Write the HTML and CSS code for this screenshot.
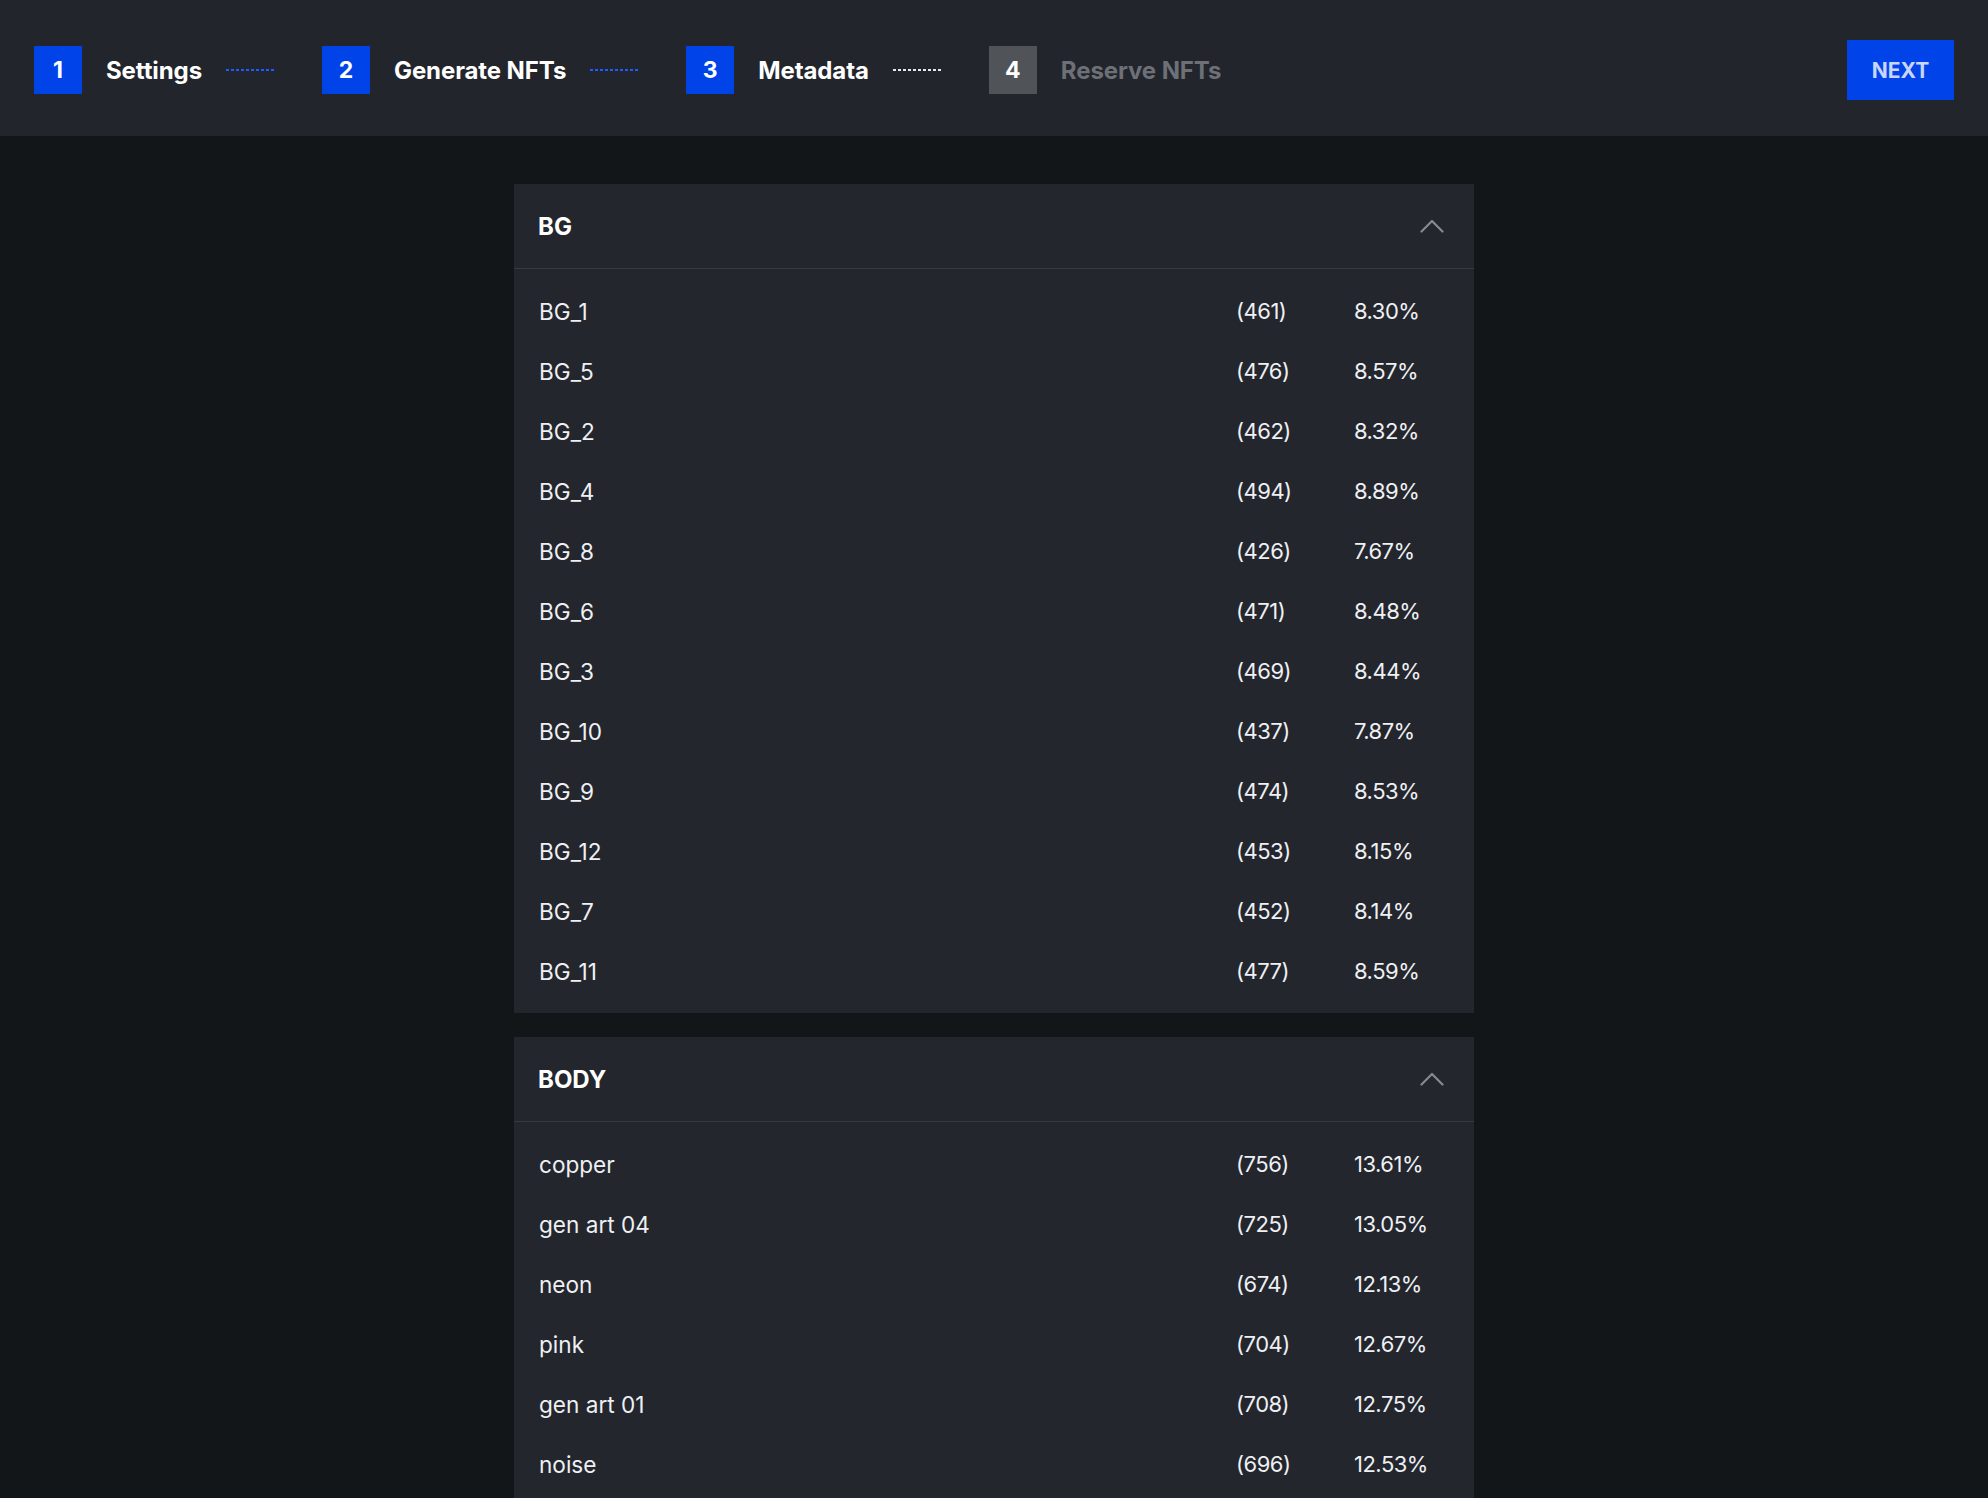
FILE: index.html
```html
<!DOCTYPE html>
<html lang="en">
<head>
<meta charset="utf-8">
<title>Metadata</title>
<link rel="stylesheet" href="styles.css">
</head>
<body>
<header class="topbar">
  <nav class="steps">
    <div class="step">
      <span class="num">1</span><span class="label">Settings</span>
      <svg class="conn conn-blue" width="48" height="2" viewBox="0 0 48 2"><line x1="0" y1="1" x2="48" y2="1" stroke="currentColor" stroke-width="1.4" stroke-dasharray="3 2" shape-rendering="crispEdges"/></svg>
    </div>
    <div class="step">
      <span class="num">2</span><span class="label">Generate NFTs</span>
      <svg class="conn conn-blue" width="48" height="2" viewBox="0 0 48 2"><line x1="0" y1="1" x2="48" y2="1" stroke="currentColor" stroke-width="1.4" stroke-dasharray="3 2" shape-rendering="crispEdges"/></svg>
    </div>
    <div class="step">
      <span class="num">3</span><span class="label">Metadata</span>
      <svg class="conn conn-white" width="48" height="2" viewBox="0 0 48 2"><line x1="0" y1="1" x2="48" y2="1" stroke="currentColor" stroke-width="1.4" stroke-dasharray="3 2" shape-rendering="crispEdges"/></svg>
    </div>
    <div class="step step-off">
      <span class="num">4</span><span class="label">Reserve NFTs</span>
    </div>
  </nav>
  <button class="next">NEXT</button>
</header>

<main class="content">
  <section class="panel">
    <div class="panel-head">
      <h2 class="panel-title">BG</h2>
      <svg class="chev" width="24" height="14" viewBox="0 0 24 14"><path d="M1.5 12.5 L12 2 L22.5 12.5" fill="none" stroke="currentColor" stroke-width="2.2" stroke-linecap="round" stroke-linejoin="round"/></svg>
    </div>
    <div class="panel-body">
      <div class="row"><span class="name">BG_1</span><span class="count">(461)</span><span class="pct">8.30%</span></div>
      <div class="row"><span class="name">BG_5</span><span class="count">(476)</span><span class="pct">8.57%</span></div>
      <div class="row"><span class="name">BG_2</span><span class="count">(462)</span><span class="pct">8.32%</span></div>
      <div class="row"><span class="name">BG_4</span><span class="count">(494)</span><span class="pct">8.89%</span></div>
      <div class="row"><span class="name">BG_8</span><span class="count">(426)</span><span class="pct">7.67%</span></div>
      <div class="row"><span class="name">BG_6</span><span class="count">(471)</span><span class="pct">8.48%</span></div>
      <div class="row"><span class="name">BG_3</span><span class="count">(469)</span><span class="pct">8.44%</span></div>
      <div class="row"><span class="name">BG_10</span><span class="count">(437)</span><span class="pct">7.87%</span></div>
      <div class="row"><span class="name">BG_9</span><span class="count">(474)</span><span class="pct">8.53%</span></div>
      <div class="row"><span class="name">BG_12</span><span class="count">(453)</span><span class="pct">8.15%</span></div>
      <div class="row"><span class="name">BG_7</span><span class="count">(452)</span><span class="pct">8.14%</span></div>
      <div class="row"><span class="name">BG_11</span><span class="count">(477)</span><span class="pct">8.59%</span></div>
    </div>
  </section>

  <section class="panel">
    <div class="panel-head">
      <h2 class="panel-title">BODY</h2>
      <svg class="chev" width="24" height="14" viewBox="0 0 24 14"><path d="M1.5 12.5 L12 2 L22.5 12.5" fill="none" stroke="currentColor" stroke-width="2.2" stroke-linecap="round" stroke-linejoin="round"/></svg>
    </div>
    <div class="panel-body">
      <div class="row"><span class="name">copper</span><span class="count">(756)</span><span class="pct">13.61%</span></div>
      <div class="row"><span class="name">gen art 04</span><span class="count">(725)</span><span class="pct">13.05%</span></div>
      <div class="row"><span class="name">neon</span><span class="count">(674)</span><span class="pct">12.13%</span></div>
      <div class="row"><span class="name">pink</span><span class="count">(704)</span><span class="pct">12.67%</span></div>
      <div class="row"><span class="name">gen art 01</span><span class="count">(708)</span><span class="pct">12.75%</span></div>
      <div class="row"><span class="name">noise</span><span class="count">(696)</span><span class="pct">12.53%</span></div>
    </div>
  </section>
</main>
</body>
</html>
```

FILE: styles.css
```css
* { box-sizing: border-box; }

html, body {
  margin: 0;
  padding: 0;
}

body {
  background: #131619;
  color: #eef0f3;
  font-family: Inter, "Noto Sans", "Liberation Sans", sans-serif;
  -webkit-font-smoothing: antialiased;
}

.topbar {
  height: 136px;
  padding: 4px 34px 0 34px;
  background: #22252b;
  display: flex;
  align-items: center;
  justify-content: space-between;
}

.steps {
  display: flex;
  align-items: center;
}

.step {
  display: flex;
  align-items: center;
}

.num {
  width: 48px;
  height: 48px;
  display: flex;
  align-items: center;
  justify-content: center;
  background: #0043e8;
  color: #ffffff;
  font-size: 23px;
  font-weight: 700;
  margin-right: 24px;
}

.label {
  font-size: 24px;
  font-weight: 700;
  color: #ffffff;
  margin-right: 24px;
  letter-spacing: -0.1px;
}

.conn {
  display: block;
  width: 48px;
  height: 2px;
  margin-right: 48px;
}

.conn-blue {
  color: #1f5cff;
}

.conn-white {
  color: #e6e8ec;
}

.step-off .num {
  background: #505357;
  color: #ffffff;
}

.step-off .label {
  color: #6d7077;
}

.next {
  width: 107px;
  height: 60px;
  border: 0;
  background: #0043e8;
  color: #c9d5ff;
  font-family: Inter, "Noto Sans", "Liberation Sans", sans-serif;
  font-size: 21px;
  font-weight: 700;
  padding: 0;
  cursor: pointer;
}

.content {
  padding-top: 48px;
  display: flex;
  flex-direction: column;
  align-items: center;
  gap: 24px;
}

.panel {
  width: 960px;
  background: #23262d;
}

.panel-head {
  height: 85px;
  padding: 0 30px 0 24px;
  display: flex;
  align-items: center;
  justify-content: space-between;
  border-bottom: 1px solid #373a41;
}

.panel-title {
  margin: 0;
  font-size: 24px;
  font-weight: 700;
  color: #ffffff;
}

.chev {
  color: #868a92;
  display: block;
}

.panel-body {
  padding: 12px 24px;
}

.row {
  height: 60px;
  display: grid;
  grid-template-columns: 1fr 118px 96px;
  align-items: center;
  font-size: 22.6px;
  color: #eef0f3;
}

.name {
  padding-left: 1px;
}

.count,
.pct {
  font-size: 22px;
  letter-spacing: -0.5px;
}
```
